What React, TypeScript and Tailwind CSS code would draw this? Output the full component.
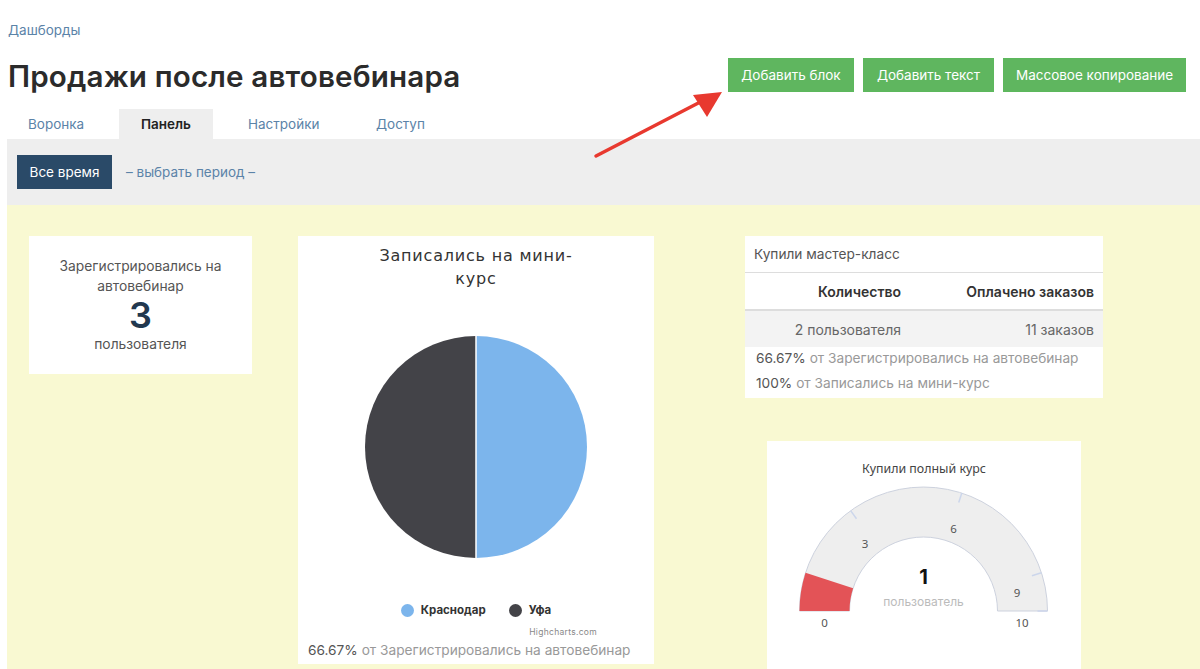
import React from "react";

const sans = "font-['Inter','Noto_Sans',sans-serif]";

function Gauge() {
  const cx = 156.5, cy = 170, R = 124, r = 74;
  const pt = (rad: number, deg: number) => {
    const a = (deg * Math.PI) / 180;
    return [cx - rad * Math.cos(a), cy - rad * Math.sin(a)];
  };
  const [ox, oy] = pt(R, 18);
  const [ix, iy] = pt(r, 18);
  const ticks = [54, 108, 162, 180];
  return (
    <svg width="314" height="228" viewBox="0 0 314 228" className="block">
      <path d={`M${cx - R} ${cy} A${R} ${R} 0 0 1 ${cx + R} ${cy} L${cx + r} ${cy} A${r} ${r} 0 0 0 ${cx - r} ${cy} Z`} fill="#eeeeee" stroke="#cdd2de" strokeWidth="1" />
      <path d={`M${cx - R} ${cy} A${R} ${R} 0 0 1 ${ox} ${oy} L${ix} ${iy} A${r} ${r} 0 0 0 ${cx - r} ${cy} Z`} fill="#e35357" />
      {ticks.map((d) => {
        const [a, b] = pt(R, d);
        const [c, e] = pt(R - 10, d);
        return <line key={d} x1={a} y1={b} x2={c} y2={e} stroke="#ccd6eb" strokeWidth="1.5" />;
      })}
      <g fontFamily="'Noto Sans','Open Sans',sans-serif" fontSize="11.5" fill="#555555" textAnchor="middle">
        <text x="98" y="107">3</text>
        <text x="186.500" y="92">6</text>
        <text x="250" y="156">9</text>
        <text x="57.500" y="186">0</text>
        <text x="255" y="186">10</text>
      </g>
    </svg>
  );
}

export default function App() {
  return (
    <div className={`relative h-[669px] w-[1200px] overflow-hidden bg-white ${sans} text-[#333]`}>
      <div className="pl-2 pr-[14px]">
        <div className="pt-[22px] text-[13.5px] leading-[17px] text-[#5b83a8]">Дашборды</div>
        <div className="flex items-start justify-between">
          <h1 className="pt-[19px] text-[29.6px] font-semibold leading-[36px] tracking-[0.15px] text-[#2b2b2b]">Продажи после автовебинара</h1>
          <div className="flex gap-[9px] pt-[19px] text-[13.5px]">
            <button className="h-[34px] w-[126px] border border-[#5cb85c] bg-[#5fb65f] text-white">Добавить блок</button>
            <button className="h-[34px] w-[131px] border border-[#5cb85c] bg-[#5fb65f] text-white">Добавить текст</button>
            <button className="h-[34px] w-[183px] border border-[#5cb85c] bg-[#5fb65f] text-white">Массовое копирование</button>
          </div>
        </div>
      </div>

      <div className="mt-[15px] flex h-[30px] pl-[28px] text-[13.5px] leading-[30px] text-[#5b83a8]">
        <span className="w-[91px]">Воронка</span>
        <span className="w-[94px] bg-[#eeeeee] text-center font-semibold text-[#222]">Панель</span>
        <span className="ml-[35px] w-[128px]">Настройки</span>
        <span>Доступ</span>
      </div>

      <div className="ml-[7px] flex h-[66px] items-center gap-[14px] bg-[#eeeeee] pl-[10px] text-[13.5px]">
        <span className="flex h-[34px] w-[95px] items-center justify-center bg-[#2a4a68] text-white">Все время</span>
        <span className="text-[#5b83a8]">– выбрать период –</span>
      </div>

      <div className="ml-[7px] flex h-[464px] items-start bg-[#f9f9d2] pl-[22px] pt-[31px]">
        <div className="flex h-[138px] w-[223px] flex-col items-center bg-white px-5 pt-[20px] text-center text-[13.8px] leading-[20px] text-[#555]">
          <div>Зарегистрировались на автовебинар</div>
          <div className="text-[36px] font-semibold leading-[38px] text-[#22384f]">3</div>
          <div>пользователя</div>
        </div>

        <div className="ml-[46px] flex h-[428px] w-[356px] flex-col items-center bg-white">
          <div className="mt-[8px] w-[220px] text-center font-['DejaVu_Sans',sans-serif] text-[16px] leading-[23px] tracking-[0.8px] text-[#333]">Записались на мини-курс</div>
          <svg width="224" height="224" viewBox="0 0 224 224" className="mt-[45px] block">
            <path d="M112 1 A111 111 0 0 1 112 223 Z" fill="#7cb5ec" />
            <path d="M112 1 A111 111 0 0 0 112 223 Z" fill="#434348" />
            <line x1="112" y1="0" x2="112" y2="224" stroke="#fff" strokeWidth="1.500" />
          </svg>
          <div className="mt-[43px] flex items-center text-[11.5px] font-bold leading-[16px] text-[#333]">
            <span className="mr-[7px] h-[13px] w-[13px] rounded-full bg-[#7cb5ec]" />
            <span>Краснодар</span>
            <span className="ml-[23px] mr-[7px] h-[13px] w-[13px] rounded-full bg-[#434348]" />
            <span>Уфа</span>
          </div>
          <div className="mt-[8px] w-full pr-[57px] text-right text-[8.5px] leading-[12px] tracking-[0.3px] text-[#888]">Highcharts.com</div>
          <div className="mt-[2px] w-full pl-[10px] text-[13.7px] leading-[20px] text-[#999]"><span className="text-[#555]">66.67%</span> от Зарегистрировались на автовебинар</div>
        </div>

        <div className="ml-[91px] flex flex-col">
          <div className="h-[162px] w-[358px] bg-white text-[14px]">
            <div className="flex h-[37px] items-center border-b border-[#dddddd] pl-[9px] text-[13.7px] text-[#555]">Купили мастер-класс</div>
            <div className="flex h-[38px] items-center border-b-2 border-[#dddddd] font-semibold text-[#333]">
              <span className="w-[156px] text-right">Количество</span>
              <span className="w-[193px] text-right">Оплачено заказов</span>
            </div>
            <div className="flex h-[36px] items-center bg-[#f3f3f3] text-[#666]">
              <span className="w-[156px] text-right">2 пользователя</span>
              <span className="w-[193px] text-right">11 заказов</span>
            </div>
            <div className="-mt-[1px] text-[13.7px] leading-[25px] text-[#999]">
              <div className="pl-[11px]"><span className="text-[#555]">66.67%</span> от Зарегистрировались на автовебинар</div>
              <div className="pl-[11px]"><span className="text-[#555]">100%</span> от Записались на мини-курс</div>
            </div>
          </div>

          <div className="relative ml-[22px] mt-[43px] h-[228px] w-[314px] bg-white">
            <div className="absolute left-0 right-0 top-[20px] text-center font-['Noto_Sans',sans-serif] text-[12.4px] leading-[16px] text-[#444]">Купили полный курс</div>
            <Gauge />
            <div className="absolute left-0 right-[1px] top-[124px] text-center text-[20px] font-bold leading-[24px] text-[#111]">1</div>
            <div className="absolute left-0 right-[1px] top-[153px] text-center text-[12px] leading-[16px] text-[#bbb]">пользователь</div>
          </div>
        </div>
      </div>

      <svg className="pointer-events-none absolute left-[590px] top-[85px]" width="140" height="80" viewBox="0 0 140 80">
        <line x1="6" y1="71" x2="118" y2="13" stroke="#e8392f" strokeWidth="3.500" strokeLinecap="round" />
        <polygon points="132,7 103,10 117,32" fill="#e8392f" />
      </svg>
    </div>
  );
}
